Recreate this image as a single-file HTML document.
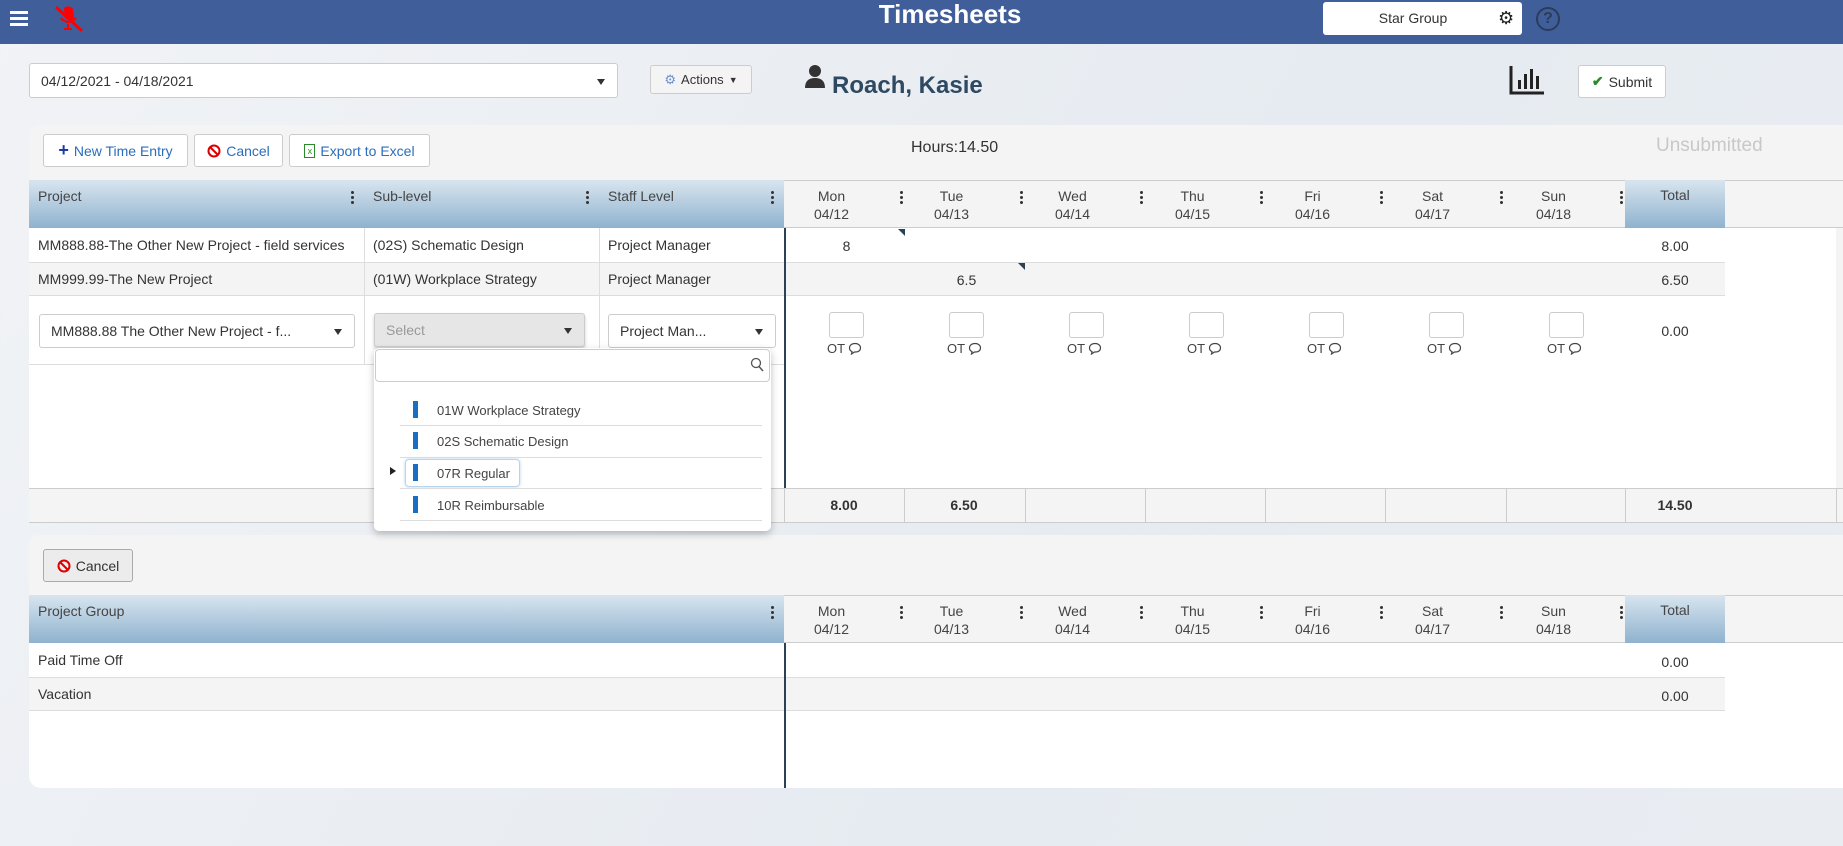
<!DOCTYPE html>
<html><head><meta charset="utf-8"><style>
*{box-sizing:border-box;margin:0;padding:0}
body{width:1843px;height:846px;overflow:hidden;position:relative;font-family:"Liberation Sans",sans-serif;font-size:14px;color:#333;background:linear-gradient(120deg,#f1f3f6 0%,#e6ebf1 60%,#e9edf2 100%)}
.a{position:absolute}
.hdr{left:0;top:0;width:1843px;height:44px;background:#405e9a}
.btn{position:absolute;background:#fff;border:1px solid #ccc;border-radius:3px;font-size:14px;display:flex;align-items:center;justify-content:center;gap:5px}
.blue{color:#2a6ebb}
.gh{background:linear-gradient(#d8e5ef,#8fb2cf)}
.kb{position:absolute;width:3px;top:11px}
.kb i{display:block;width:3px;height:3px;background:#333;border-radius:50%;margin-bottom:2px}
.dh{position:absolute;text-align:center;color:#444;font-size:14px;line-height:18px}
.c{position:absolute;font-size:14px}
.sel{position:absolute;background:#fff;border:1px solid #ccc;border-radius:3px;font-size:14px;padding-left:11px;display:flex;align-items:center}
.sel:after{content:"";position:absolute;right:12px;top:50%;margin-top:-2px;border-left:4px solid transparent;border-right:4px solid transparent;border-top:6px solid #333}
.ib{position:absolute;width:35px;height:26px;border:1px solid #ccc;border-radius:3px;background:#fff}
.ot{position:absolute;font-size:13px;color:#444;display:flex;align-items:center;gap:3px}
.bar{position:absolute;width:5px;height:17px;background:#1a6fc4}
.it{position:absolute;font-size:13px;color:#444}
.ln{position:absolute;height:1px;background:#ddd;left:400px;width:362px}
</style></head><body>
<div class="a hdr"></div>
<div class="a" style="left:10px;top:11px;width:18px;height:3px;background:#fff;box-shadow:0 6px 0 #fff,0 12px 0 #fff"></div>
<svg class="a" style="left:52px;top:4px" width="34" height="30" viewBox="0 0 34 30"><path d="M12 4 Q17 0 21 5 L22 14 Q18 18 13 14 Z" fill="#f00"/><path d="M9 14 Q16 22 24 14 M16 20 V25 M12 25 H20" stroke="#f00" stroke-width="2" fill="none"/><path d="M4 3 L30 27" stroke="#f00" stroke-width="3"/></svg>
<div class="a" style="left:0;width:1900px;top:0;text-align:center;color:#fff;font-weight:bold;font-size:26px;line-height:28px">Timesheets</div>
<div class="a" style="left:1323px;top:2px;width:199px;height:33px;background:#fff;border-radius:3px"></div>
<div class="a" style="left:1323px;top:10px;width:180px;text-align:center;font-size:14px;color:#333">Star Group</div>
<div class="a" style="left:1498px;top:8px;font-size:18px;color:#222">⚙</div>
<div class="a" style="left:1536px;top:7px;width:24px;height:24px;border:2px solid #2b3c5a;border-radius:50%;color:#2b3c5a;font-size:16px;text-align:center;line-height:20px;font-weight:bold">?</div>

<div class="sel" style="left:29px;top:63px;width:589px;height:35px">04/12/2021 - 04/18/2021</div>
<div class="btn" style="left:650px;top:65px;width:102px;height:29px;background:#f4f4f4;font-size:13px"><span style="color:#6a8fd0">⚙</span>Actions <span style="font-size:9px">▼</span></div>
<svg class="a" style="left:804px;top:64px" width="22" height="26" viewBox="0 0 22 26"><circle cx="11" cy="7" r="6" fill="#333"/><path d="M1 24 Q1 14 11 14 Q21 14 21 24 Z" fill="#333"/></svg>
<div class="a" style="left:832px;top:72px;font-size:24px;font-weight:bold;color:#2e4a62">Roach, Kasie</div>
<svg class="a" style="left:1509px;top:66px" width="36" height="29" viewBox="0 0 36 29"><path d="M2 0 V27 H35" stroke="#222" stroke-width="3" fill="none"/><rect x="9" y="14" width="3" height="9" fill="#222"/><rect x="15" y="8" width="3" height="15" fill="#222"/><rect x="21" y="3" width="3" height="20" fill="#222"/><rect x="27" y="10" width="3" height="13" fill="#222"/></svg>
<div class="btn" style="left:1578px;top:65px;width:88px;height:33px"><span style="color:#2a8a2a;font-weight:bold">✔</span>Submit</div>

<!-- panel 1 -->
<div class="a" style="left:29px;top:125px;width:1814px;height:56px;background:#f4f4f4;border-radius:10px 0 0 0"></div>
<div class="btn blue" style="left:43px;top:134px;width:145px;height:33px"><b style="font-size:18px;color:#1a3aa8">+</b>New Time Entry</div>
<div class="btn blue" style="left:194px;top:134px;width:89px;height:33px"><svg width="14" height="14" viewBox="0 0 14 14"><circle cx="7" cy="7" r="5.5" stroke="#d00" stroke-width="2" fill="none"/><path d="M3 3 L11 11" stroke="#d00" stroke-width="2"/></svg>Cancel</div>
<div class="btn blue" style="left:289px;top:134px;width:141px;height:33px"><span style="display:inline-block;width:11px;height:14px;border:1px solid #2a8a2a;color:#2a8a2a;font-size:9px;line-height:12px;text-align:center">x</span>Export to Excel</div>
<div class="a" style="left:911px;top:139px;font-size:16px;color:#333">Hours:14.50</div>
<div class="a" style="left:1656px;top:135px;font-size:19px;color:#c8c8c8">Unsubmitted</div>

<div class="a" style="left:29px;top:180px;width:1814px;height:343px;background:#fff"></div>
<div class="a" style="left:784px;top:180px;width:1059px;height:48px;background:#f4f4f4;border-top:1px solid #ccc;border-bottom:1px solid #ccc"></div>
<div class="a gh" style="left:29px;top:180px;width:755px;height:48px"></div>
<div class="a gh" style="left:1625px;top:180px;width:100px;height:48px"></div>
<div class="c" style="left:38px;top:188px;color:#444">Project</div>
<div class="kb" style="left:351px;top:191px"><i></i><i></i><i></i></div>
<div class="c" style="left:373px;top:188px;color:#444">Sub-level</div>
<div class="kb" style="left:586px;top:191px"><i></i><i></i><i></i></div>
<div class="c" style="left:608px;top:188px;color:#444">Staff Level</div>
<div class="kb" style="left:771px;top:191px"><i></i><i></i><i></i></div>
<div class="c" style="left:1625px;top:187px;width:100px;text-align:center;color:#444">Total</div>

<div class="dh" style="left:784px;top:187px;width:95px">Mon<br>04/12</div><div class="kb" style="left:900px;top:191px"><i></i><i></i><i></i></div>
<div class="dh" style="left:904px;top:187px;width:95px">Tue<br>04/13</div><div class="kb" style="left:1020px;top:191px"><i></i><i></i><i></i></div>
<div class="dh" style="left:1025px;top:187px;width:95px">Wed<br>04/14</div><div class="kb" style="left:1140px;top:191px"><i></i><i></i><i></i></div>
<div class="dh" style="left:1145px;top:187px;width:95px">Thu<br>04/15</div><div class="kb" style="left:1260px;top:191px"><i></i><i></i><i></i></div>
<div class="dh" style="left:1265px;top:187px;width:95px">Fri<br>04/16</div><div class="kb" style="left:1380px;top:191px"><i></i><i></i><i></i></div>
<div class="dh" style="left:1385px;top:187px;width:95px">Sat<br>04/17</div><div class="kb" style="left:1500px;top:191px"><i></i><i></i><i></i></div>
<div class="dh" style="left:1506px;top:187px;width:95px">Sun<br>04/18</div><div class="kb" style="left:1620px;top:191px"><i></i><i></i><i></i></div>

<!-- rows -->
<div class="a" style="left:29px;top:262px;width:1696px;height:34px;background:#f4f4f4;border-top:1px solid #ddd;border-bottom:1px solid #ddd"></div>
<div class="a" style="left:29px;top:364px;width:755px;height:1px;background:#ddd"></div>
<div class="a" style="left:364px;top:228px;width:1px;height:136px;background:#ddd"></div>
<div class="a" style="left:599px;top:228px;width:1px;height:136px;background:#ddd"></div>
<div class="a" style="left:784px;top:228px;width:2px;height:260px;background:#2b4256"></div>
<div class="a" style="left:1836px;top:228px;width:7px;height:260px;background:#f4f4f4"></div>
<div class="c" style="left:38px;top:237px">MM888.88-The Other New Project - field services</div>
<div class="c" style="left:373px;top:237px">(02S) Schematic Design</div>
<div class="c" style="left:608px;top:237px">Project Manager</div>
<div class="c" style="left:784px;top:238px;width:125px;text-align:center">8</div>
<div class="a" style="left:898px;top:229px;border-left:7px solid transparent;border-top:7px solid #2b4256"></div>
<div class="c" style="left:1625px;top:238px;width:100px;text-align:center">8.00</div>
<div class="c" style="left:38px;top:271px">MM999.99-The New Project</div>
<div class="c" style="left:373px;top:271px">(01W) Workplace Strategy</div>
<div class="c" style="left:608px;top:271px">Project Manager</div>
<div class="c" style="left:904px;top:272px;width:125px;text-align:center">6.5</div>
<div class="a" style="left:1018px;top:263px;border-left:7px solid transparent;border-top:7px solid #2b4256"></div>
<div class="c" style="left:1625px;top:272px;width:100px;text-align:center">6.50</div>

<div class="sel" style="left:39px;top:314px;width:316px;height:34px">MM888.88 The Other New Project - f...</div>
<div class="sel" style="left:374px;top:313px;width:211px;height:34px;background:#e6e6e6;color:#999;box-shadow:0 2px 3px rgba(0,0,0,.2)">Select</div>
<div class="sel" style="left:608px;top:314px;width:168px;height:34px">Project Man...</div>
<div class="ib" style="left:829px;top:312px"></div><div class="ot" style="left:827px;top:341px">OT <svg width="14" height="13" viewBox="0 0 14 13"><path d="M7 1.5 C3.5 1.5 1.5 3.5 1.5 6 C1.5 7.8 2.6 9 4 9.6 L3.5 12 L6.5 10 C10.5 10.3 12.5 8.3 12.5 6 C12.5 3.5 10.5 1.5 7 1.5 Z" stroke="#444" stroke-width="1.2" fill="none"/></svg></div>
<div class="ib" style="left:949px;top:312px"></div><div class="ot" style="left:947px;top:341px">OT <svg width="14" height="13" viewBox="0 0 14 13"><path d="M7 1.5 C3.5 1.5 1.5 3.5 1.5 6 C1.5 7.8 2.6 9 4 9.6 L3.5 12 L6.5 10 C10.5 10.3 12.5 8.3 12.5 6 C12.5 3.5 10.5 1.5 7 1.5 Z" stroke="#444" stroke-width="1.2" fill="none"/></svg></div>
<div class="ib" style="left:1069px;top:312px"></div><div class="ot" style="left:1067px;top:341px">OT <svg width="14" height="13" viewBox="0 0 14 13"><path d="M7 1.5 C3.5 1.5 1.5 3.5 1.5 6 C1.5 7.8 2.6 9 4 9.6 L3.5 12 L6.5 10 C10.5 10.3 12.5 8.3 12.5 6 C12.5 3.5 10.5 1.5 7 1.5 Z" stroke="#444" stroke-width="1.2" fill="none"/></svg></div>
<div class="ib" style="left:1189px;top:312px"></div><div class="ot" style="left:1187px;top:341px">OT <svg width="14" height="13" viewBox="0 0 14 13"><path d="M7 1.5 C3.5 1.5 1.5 3.5 1.5 6 C1.5 7.8 2.6 9 4 9.6 L3.5 12 L6.5 10 C10.5 10.3 12.5 8.3 12.5 6 C12.5 3.5 10.5 1.5 7 1.5 Z" stroke="#444" stroke-width="1.2" fill="none"/></svg></div>
<div class="ib" style="left:1309px;top:312px"></div><div class="ot" style="left:1307px;top:341px">OT <svg width="14" height="13" viewBox="0 0 14 13"><path d="M7 1.5 C3.5 1.5 1.5 3.5 1.5 6 C1.5 7.8 2.6 9 4 9.6 L3.5 12 L6.5 10 C10.5 10.3 12.5 8.3 12.5 6 C12.5 3.5 10.5 1.5 7 1.5 Z" stroke="#444" stroke-width="1.2" fill="none"/></svg></div>
<div class="ib" style="left:1429px;top:312px"></div><div class="ot" style="left:1427px;top:341px">OT <svg width="14" height="13" viewBox="0 0 14 13"><path d="M7 1.5 C3.5 1.5 1.5 3.5 1.5 6 C1.5 7.8 2.6 9 4 9.6 L3.5 12 L6.5 10 C10.5 10.3 12.5 8.3 12.5 6 C12.5 3.5 10.5 1.5 7 1.5 Z" stroke="#444" stroke-width="1.2" fill="none"/></svg></div>
<div class="ib" style="left:1549px;top:312px"></div><div class="ot" style="left:1547px;top:341px">OT <svg width="14" height="13" viewBox="0 0 14 13"><path d="M7 1.5 C3.5 1.5 1.5 3.5 1.5 6 C1.5 7.8 2.6 9 4 9.6 L3.5 12 L6.5 10 C10.5 10.3 12.5 8.3 12.5 6 C12.5 3.5 10.5 1.5 7 1.5 Z" stroke="#444" stroke-width="1.2" fill="none"/></svg></div>
<div class="c" style="left:1625px;top:323px;width:100px;text-align:center">0.00</div>

<!-- totals row -->
<div class="a" style="left:29px;top:488px;width:1814px;height:35px;background:#f4f4f4;border-top:1px solid #ccc;border-bottom:1px solid #ccc"></div>
<div class="a" style="left:784px;top:488px;width:1px;height:35px;background:#ccc;box-shadow:120px 0 #ccc,241px 0 #ccc,361px 0 #ccc,481px 0 #ccc,601px 0 #ccc,722px 0 #ccc,841px 0 #ccc,1052px 0 #ccc"></div>
<div class="c" style="left:784px;top:497px;width:120px;text-align:center;font-weight:bold">8.00</div>
<div class="c" style="left:904px;top:497px;width:120px;text-align:center;font-weight:bold">6.50</div>
<div class="c" style="left:1625px;top:497px;width:100px;text-align:center;font-weight:bold">14.50</div>

<!-- panel 2 -->
<div class="a" style="left:29px;top:535px;width:1814px;height:60px;background:#f4f4f4;border-radius:10px 0 0 0"></div>
<div class="btn" style="left:43px;top:549px;width:90px;height:33px;background:#ececec;border-color:#aaa"><svg width="14" height="14" viewBox="0 0 14 14"><circle cx="7" cy="7" r="5.5" stroke="#d00" stroke-width="2" fill="none"/><path d="M3 3 L11 11" stroke="#d00" stroke-width="2"/></svg>Cancel</div>
<div class="a" style="left:29px;top:595px;width:1814px;height:193px;background:#fff;border-radius:0 0 0 12px"></div>
<div class="a" style="left:784px;top:595px;width:1059px;height:48px;background:#f4f4f4;border-top:1px solid #ccc;border-bottom:1px solid #ccc"></div>
<div class="a gh" style="left:29px;top:595px;width:755px;height:48px"></div>
<div class="a gh" style="left:1625px;top:595px;width:100px;height:48px"></div>
<div class="c" style="left:38px;top:603px;color:#444">Project Group</div>
<div class="kb" style="left:771px;top:606px"><i></i><i></i><i></i></div>
<div class="c" style="left:1625px;top:602px;width:100px;text-align:center;color:#444">Total</div>
<div class="dh" style="left:784px;top:602px;width:95px">Mon<br>04/12</div><div class="kb" style="left:900px;top:606px"><i></i><i></i><i></i></div>
<div class="dh" style="left:904px;top:602px;width:95px">Tue<br>04/13</div><div class="kb" style="left:1020px;top:606px"><i></i><i></i><i></i></div>
<div class="dh" style="left:1025px;top:602px;width:95px">Wed<br>04/14</div><div class="kb" style="left:1140px;top:606px"><i></i><i></i><i></i></div>
<div class="dh" style="left:1145px;top:602px;width:95px">Thu<br>04/15</div><div class="kb" style="left:1260px;top:606px"><i></i><i></i><i></i></div>
<div class="dh" style="left:1265px;top:602px;width:95px">Fri<br>04/16</div><div class="kb" style="left:1380px;top:606px"><i></i><i></i><i></i></div>
<div class="dh" style="left:1385px;top:602px;width:95px">Sat<br>04/17</div><div class="kb" style="left:1500px;top:606px"><i></i><i></i><i></i></div>
<div class="dh" style="left:1506px;top:602px;width:95px">Sun<br>04/18</div><div class="kb" style="left:1620px;top:606px"><i></i><i></i><i></i></div>
<div class="a" style="left:29px;top:677px;width:1696px;height:34px;background:#f4f4f4;border-top:1px solid #ddd;border-bottom:1px solid #ddd"></div>
<div class="a" style="left:784px;top:643px;width:2px;height:145px;background:#2b4256"></div>
<div class="c" style="left:38px;top:652px">Paid Time Off</div>
<div class="c" style="left:1625px;top:654px;width:100px;text-align:center">0.00</div>
<div class="c" style="left:38px;top:686px">Vacation</div>
<div class="c" style="left:1625px;top:688px;width:100px;text-align:center">0.00</div>

<!-- dropdown -->
<div class="a" style="left:374px;top:348px;width:397px;height:183px;background:#fff;border-radius:5px;box-shadow:0 3px 8px rgba(0,0,0,.25)"></div>
<div class="a" style="left:375px;top:349px;width:395px;height:33px;border:1px solid #ccc;border-radius:4px"></div>
<svg class="a" style="left:750px;top:357px" width="14" height="16" viewBox="0 0 14 16"><circle cx="6" cy="6" r="4.5" stroke="#555" stroke-width="1.3" fill="none"/><path d="M9 9.5 L13 14" stroke="#555" stroke-width="1.5"/></svg>
<div class="bar" style="left:413px;top:401px"></div><div class="it" style="left:437px;top:403px">01W Workplace Strategy</div><div class="ln" style="top:425px"></div>
<div class="bar" style="left:413px;top:432px"></div><div class="it" style="left:437px;top:434px">02S Schematic Design</div><div class="ln" style="top:457px"></div>
<div class="a" style="left:405px;top:459px;width:115px;height:28px;border:1px solid #b8d4ec;border-radius:4px;box-shadow:0 0 3px #b8d4ec"></div>
<div class="a" style="left:390px;top:467px;border-top:4px solid transparent;border-bottom:4px solid transparent;border-left:6px solid #222"></div>
<div class="bar" style="left:413px;top:464px"></div><div class="it" style="left:437px;top:466px">07R Regular</div><div class="ln" style="top:488px"></div>
<div class="bar" style="left:413px;top:496px"></div><div class="it" style="left:437px;top:498px">10R Reimbursable</div><div class="ln" style="top:520px"></div>
</body></html>
